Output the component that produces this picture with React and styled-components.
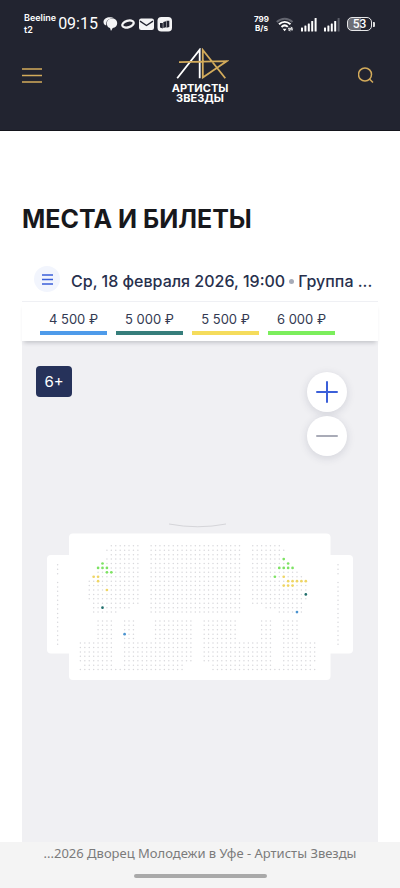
import { useState } from 'react';
import styled, { createGlobalStyle } from 'styled-components';

const GlobalStyle = createGlobalStyle`
  * {
    box-sizing: border-box;
  }

  body {
    margin: 0;
    background: #fff;
    font-family: Inter, 'Liberation Sans', sans-serif;
  }

  button {
    padding: 0;
    border: 0;
    background: none;
    font: inherit;
    color: inherit;
    cursor: pointer;
  }
`;

const Page = styled.div`
  display: flex;
  flex-direction: column;
  min-height: 100vh;
`;

const Header = styled.header`
  background: #222430;
  border-bottom: 1px solid #14151c;
  color: #fff;
`;

const StatusBar = styled.div`
  display: flex;
  align-items: center;
  justify-content: space-between;
  height: 48px;
  padding: 0 25px 0 24px;
`;

const StatusGroup = styled.div`
  display: flex;
  align-items: center;
  gap: ${(p) => p.$gap}px;
`;

const SmallText = styled.span`
  display: flex;
  flex-direction: column;
  font: ${(p) => p.$weight || 600} ${(p) => p.$size}px/${(p) => p.$line}px Inter, sans-serif;
  text-align: ${(p) => p.$align || 'left'};
`;

const Clock = styled.time`
  font: 400 16px/20px Roboto, sans-serif;
  margin-right: 3px;
`;

const Battery = styled.span`
  display: flex;
  align-items: center;

  &::after {
    content: '';
    width: 2px;
    height: 5px;
    margin-left: 1px;
    border-radius: 0 1px 1px 0;
    background: #ddd;
  }
`;

const BatteryLevel = styled.span`
  width: 25px;
  height: 14px;
  border: 1px solid #e6e6e8;
  border-radius: 5px;
  background: linear-gradient(90deg, #6d6e76 55%, #222430 55%);
  font: 500 12px/12px Roboto, sans-serif;
  text-align: center;
`;

const NavBar = styled.div`
  display: flex;
  align-items: flex-start;
  justify-content: space-between;
  height: 82px;
  padding: 0 22px;
`;

const NavButton = styled.button`
  display: flex;
  align-items: center;
  justify-content: ${(p) => p.$align};
  width: 24px;
  height: 24px;
  margin-top: 15px;
  color: #d3ab5b;
`;

const Logo = styled.a`
  display: flex;
  flex-direction: column;
  align-items: center;
  color: #fff;
  text-decoration: none;
  font: 700 11px/10px Inter, sans-serif;

  svg {
    margin-bottom: 4px;
  }
`;

const Main = styled.main`
  display: flex;
  flex: 1;
  flex-direction: column;
  padding: 70px 22px 0;
`;

const Title = styled.h1`
  margin: 0;
  color: #17181c;
  font: 700 25px/36px Inter, sans-serif;
`;

const Widget = styled.section`
  display: flex;
  flex: 1;
  flex-direction: column;
  margin-top: 22px;
`;

const EventBar = styled.div`
  display: flex;
  align-items: center;
  gap: 11px;
  height: 43px;
  padding: 2px 2px 0 12px;
  border-bottom: 1px solid #eff0f4;
`;

const ListButton = styled.button`
  display: flex;
  flex: none;
  align-items: center;
  justify-content: center;
  width: 26px;
  height: 26px;
  margin-bottom: 4px;
  border-radius: 50%;
  background: #f2f5fd;
  color: #3b5fd9;
`;

const EventName = styled.h2`
  min-width: 0;
  margin: 0;
  overflow: hidden;
  color: #27304d;
  font: 500 16px/24px Inter, sans-serif;
  text-overflow: ellipsis;
  white-space: nowrap;
`;

const Dot = styled.span`
  display: inline-block;
  width: 5px;
  height: 5px;
  margin: 0 4px 2px;
  border-radius: 50%;
  background: #a6abb8;
  vertical-align: middle;
`;

const Prices = styled.div`
  position: relative;
  display: flex;
  gap: 9px;
  height: 39px;
  padding: 6px 18px 0;
  box-shadow: 0 4px 4px -2px rgba(30, 35, 50, 0.2);
`;

const Price = styled.button`
  width: 67px;
  height: 27px;
  border-bottom: 4px solid ${(p) => p.$color};
  color: #333a52;
  font: 400 13px/23px Inter, sans-serif;
`;

const MapArea = styled.div`
  display: flex;
  flex: 1;
  flex-direction: column;
  padding: 25px 25px 160px 14px;
  background: #f0f0f3;
`;

const MapTools = styled.div`
  display: flex;
  align-items: flex-start;
  justify-content: space-between;
  padding-right: 6px;
`;

const AgeBadge = styled.span`
  width: 36px;
  border-radius: 4px;
  background: #26325a;
  color: #fff;
  font: 400 15px/31px Inter, sans-serif;
  text-align: center;
`;

const Zoom = styled.div`
  display: flex;
  flex-direction: column;
  gap: 4px;
  margin-top: 6px;
`;

const ZoomButton = styled.button`
  display: flex;
  align-items: center;
  justify-content: center;
  width: 40px;
  height: 40px;
  border-radius: 50%;
  background: #fff;
  box-shadow: 0 2px 8px rgba(40, 50, 80, 0.15);
  color: #3b5fd9;

  &:disabled {
    color: #a9abb7;
  }
`;

const Hall = styled.svg`
  display: block;
  width: 100%;
  margin-top: 64px;
  padding-left: 11px;
`;

const Footer = styled.footer`
  display: flex;
  flex-direction: column;
  align-items: center;
  height: 46px;
  background: #f4f4f4;
  color: #7b7b7b;
  font: 400 13px/22px 'Noto Sans', sans-serif;
  white-space: nowrap;
`;

const HomeBar = styled.span`
  width: 133px;
  height: 4px;
  margin-top: 10px;
  border-radius: 2px;
  background: #a9a9a9;
`;

const PRICES = [
  { label: '4 500 ₽', color: '#4e9bea' },
  { label: '5 000 ₽', color: '#367e7b' },
  { label: '5 500 ₽', color: '#f5dc5c' },
  { label: '6 000 ₽', color: '#7bee5c' },
];

const SEAT_COLORS = { b: '#4b93cf', t: '#1f6e6b', y: '#eed565', g: '#7de263' };

// column ranges per row, counted from the leftmost seat of the hall
const UPPER = [
  [[7, 13], [16, 36], [39, 45]],
  [[6, 13], [16, 36], [39, 46]],
  [[7, 13], [16, 36], [39, 45]],
  [[6, 13], [16, 36], [39, 46]],
  [[5, 13], [16, 36], [39, 47]],
  [[4, 13], [16, 36], [39, 48]],
  [[4, 13], [16, 36], [39, 49]],
  [[3, 13], [16, 36], [39, 50]],
  [[2, 13], [16, 36], [39, 51]],
  [[2, 13], [16, 36], [39, 51]],
  [[2, 13], [16, 36], [39, 51]],
  [[2, 13], [16, 36], [39, 51]],
  [[2, 13], [16, 36], [39, 51]],
  [[3, 13], [16, 36], [39, 50]],
  [[3, 11], [16, 36], [42, 50]],
  [[3, 8], [16, 36], [45, 50]],
];
const MIDDLE = [[4, 7], [10, 12], [17, 25], [28, 35], [41, 43], [46, 49]];
const LOWER = [[0, 7], [10, 25], [28, 43], [46, 53]];
const ROWS = [
  ...UPPER,
  [],
  ...Array(5).fill(MIDDLE),
  ...Array(5).fill(LOWER),
  [[1, 7], [10, 23], [30, 43], [46, 52]],
  [[0, 23], [30, 53]],
];

const FREE = {
  3: { 46: 'g' },
  4: { 5: 'g', 47: 'g' },
  5: { 4: 'g', 5: 'g', 6: 'g', 45: 'g', 46: 'g', 47: 'g', 48: 'g' },
  6: { 6: 'g', 7: 'g' },
  7: { 3: 'y', 4: 'y', 44: 'g', 46: 'y' },
  8: { 4: 'y', 47: 'y', 48: 'y', 49: 'y', 50: 'y', 51: 'y' },
  9: { 46: 'y', 47: 'y', 48: 'y' },
  10: { 6: 'y' },
  11: { 51: 't' },
  14: { 5: 't' },
  15: { 49: 'b' },
  20: { 10: 'b' },
};

const PITCH = 4.42;
const BALCONY = [0, 1, 2, ...Array.from({ length: 15 }, (_, i) => i + 4)];

function Seat({ x, y, type }) {
  return <circle cx={x} cy={y} r={type ? 1.35 : 0.75} fill={type ? SEAT_COLORS[type] : '#d8d8dc'} />;
}

function HallMap() {
  return (
    <Hall viewBox="47 520 306 162" role="img" aria-label="Схема зала">
      <path d="M169 524Q198 529.5 226 524" fill="none" stroke="#d5d5d9" strokeWidth="1" />
      <rect x="47" y="555" width="30" height="98.5" rx="4" fill="#fff" />
      <rect x="323" y="555" width="30" height="98.5" rx="4" fill="#fff" />
      <rect x="69" y="533.5" width="261.5" height="146.5" rx="4" fill="#fff" />
      {ROWS.map((ranges, row) =>
        ranges.map(([from, to]) =>
          Array.from({ length: to - from + 1 }, (_, i) => from + i).map((col) => (
            <Seat
              key={`${row}-${col}`}
              x={80.4 + col * PITCH}
              y={545.8 + row * PITCH}
              type={FREE[row]?.[col]}
            />
          ))
        )
      )}
      {BALCONY.map((row) => (
        <g key={row}>
          <Seat x={57.6} y={564.8 + row * PITCH} />
          <Seat x={338} y={564.8 + row * PITCH} />
        </g>
      ))}
    </Hall>
  );
}

function Lines({ width, height, stroke }) {
  const mid = height / 2;
  return (
    <svg width={width} height={height} stroke="currentColor" strokeWidth={stroke} aria-hidden="true">
      <path d={`M0 1H${width}M0 ${mid}H${width}M0 ${height - 1}H${width}`} />
    </svg>
  );
}

function AppIcons() {
  return (
    <svg width="70" height="16" viewBox="0 0 70 16" fill="#f4f4f5" aria-hidden="true">
      <path d="M.5 6C.5 3.200 3.500 1.200 6.800 1.200c1.800 0 3 .4 4 1C7 2 3.700 3.800 3.300 7.200L3.200 9.500C1.500 9 .5 7.800 .5 6Z" />
      <path d="M3.800 7.400C3.800 4.500 6.300 2.500 9.200 2.500c2.900 0 5 2 5 4.700 0 2.600-1.800 4.500-4.500 4.900L8 15l-1-2.900C5 11.400 3.800 9.700 3.800 7.400Z" />
      <ellipse cx="25" cy="8" rx="5.900" ry="3.300" fill="none" stroke="#f4f4f5" strokeWidth="2.300" transform="rotate(-17 25 8)" />
      <rect x="36" y="2.500" width="15" height="11.500" rx="2.200" />
      <path d="m37 5.200 6.500 4.300L50 5.200" fill="none" stroke="#222430" strokeWidth="1.400" />
      <rect x="54.500" y="1" width="14.500" height="14.500" rx="3.800" />
      <path d="M57 7.100h2.800V12.500L57 11.600ZM60.300 5.900l2.700-.6v5.900l-2.700.9ZM63.500 4.800h2.800v6.100l-2.800.9Z" fill="#222430" />
    </svg>
  );
}

function Wifi() {
  return (
    <svg width="18" height="15" viewBox="0 0 18 15" fill="none" stroke="#fff" strokeWidth="2" aria-hidden="true">
      <path d="M.8 5C5.500.5 12 .5 16.500 5" stroke="#63656f" />
      <path d="M3 7.300c3.500-3.200 8-3.200 11.500 0M5.500 9.900c2-1.800 4.500-1.800 6.300 0" />
      <path d="m6.600 11.800 2 2.500 2-2.500Z" fill="#fff" stroke="none" />
      <path d="M12 11.300h4.500l-1.500-1.500M17 12.800h-4.500l1.500 1.500" strokeWidth="1" />
    </svg>
  );
}

function Signal({ weak }) {
  return (
    <svg width="16" height="15" viewBox="0 0 16 15" fill="#fff" aria-hidden="true">
      <rect x="0" y="10.500" width="2" height="4" rx=".5" />
      <rect x="3.400" y="8.500" width="2" height="6" rx=".5" />
      <rect x="6.800" y="6.500" width="2" height="8" rx=".5" />
      <rect x="10.200" y="4" width="2" height="10.500" rx=".5" />
      <rect x="13.600" y="1" width="2" height="13.500" rx=".5" fill={weak ? '#5c5e68' : '#fff'} />
    </svg>
  );
}

function LogoMark() {
  return (
    <svg width="58" height="31" viewBox="171 47.500 58 31" fill="none" strokeWidth="1.800" aria-hidden="true">
      <path d="M177.200 77.800 199.700 49.200V77.800" stroke="#fff" />
      <path d="M179 61.600 227 60.600 202.800 77V49.500L225.300 77.800" stroke="#d3ab5b" />
    </svg>
  );
}

export default function App() {
  const [active, setActive] = useState(null);

  return (
    <Page>
      <GlobalStyle />
      <Header>
        <StatusBar>
          <StatusGroup $gap={2}>
            <SmallText $size={9} $line={12}>
              <span>Beeline</span>
              <span>t2</span>
            </SmallText>
            <Clock>09:15</Clock>
            <AppIcons />
          </StatusGroup>
          <StatusGroup $gap={7}>
            <SmallText $size={8} $line={9} $weight={700} $align="center">
              <span>799</span>
              <span>B/s</span>
            </SmallText>
            <Wifi />
            <Signal />
            <Signal weak />
            <Battery>
              <BatteryLevel>53</BatteryLevel>
            </Battery>
          </StatusGroup>
        </StatusBar>
        <NavBar>
          <NavButton $align="flex-start" aria-label="Меню">
            <Lines width={20} height={15} stroke={1.6} />
          </NavButton>
          <Logo href="#">
            <LogoMark />
            <span>АРТИСТЫ</span>
            <span>ЗВЕЗДЫ</span>
          </Logo>
          <NavButton $align="flex-end" aria-label="Поиск">
            <svg width="20" height="18" viewBox="2 0 20 18" fill="none" stroke="currentColor" strokeWidth="1.500">
              <circle cx="9" cy="8.500" r="6.500" />
              <path d="m13.500 13 3.500 3.500" />
            </svg>
          </NavButton>
        </NavBar>
      </Header>

      <Main>
        <Title>МЕСТА И БИЛЕТЫ</Title>
        <Widget>
          <EventBar>
            <ListButton aria-label="Список">
              <Lines width={11} height={11} stroke={1.5} />
            </ListButton>
            <EventName>
              Ср, 18 февраля 2026, 19:00
              <Dot />
              Группа ...
            </EventName>
          </EventBar>
          <Prices>
            {PRICES.map((price) => (
              <Price
                key={price.label}
                $color={price.color}
                aria-pressed={active === price.label}
                onClick={() => setActive(price.label)}
              >
                {price.label}
              </Price>
            ))}
          </Prices>
          <MapArea>
            <MapTools>
              <AgeBadge>6+</AgeBadge>
              <Zoom>
                <ZoomButton aria-label="Приблизить">
                  <svg width="22" height="22" stroke="currentColor" strokeWidth="2" strokeLinecap="round">
                    <path d="M1 11H21M11 1V21" />
                  </svg>
                </ZoomButton>
                <ZoomButton aria-label="Отдалить" disabled>
                  <svg width="22" height="22" stroke="currentColor" strokeWidth="2" strokeLinecap="round">
                    <path d="M1 11H21" />
                  </svg>
                </ZoomButton>
              </Zoom>
            </MapTools>
            <HallMap />
          </MapArea>
        </Widget>
      </Main>

      <Footer>
        <span>...2026 Дворец Молодежи в Уфе - Артисты Звезды</span>
        <HomeBar />
      </Footer>
    </Page>
  );
}
